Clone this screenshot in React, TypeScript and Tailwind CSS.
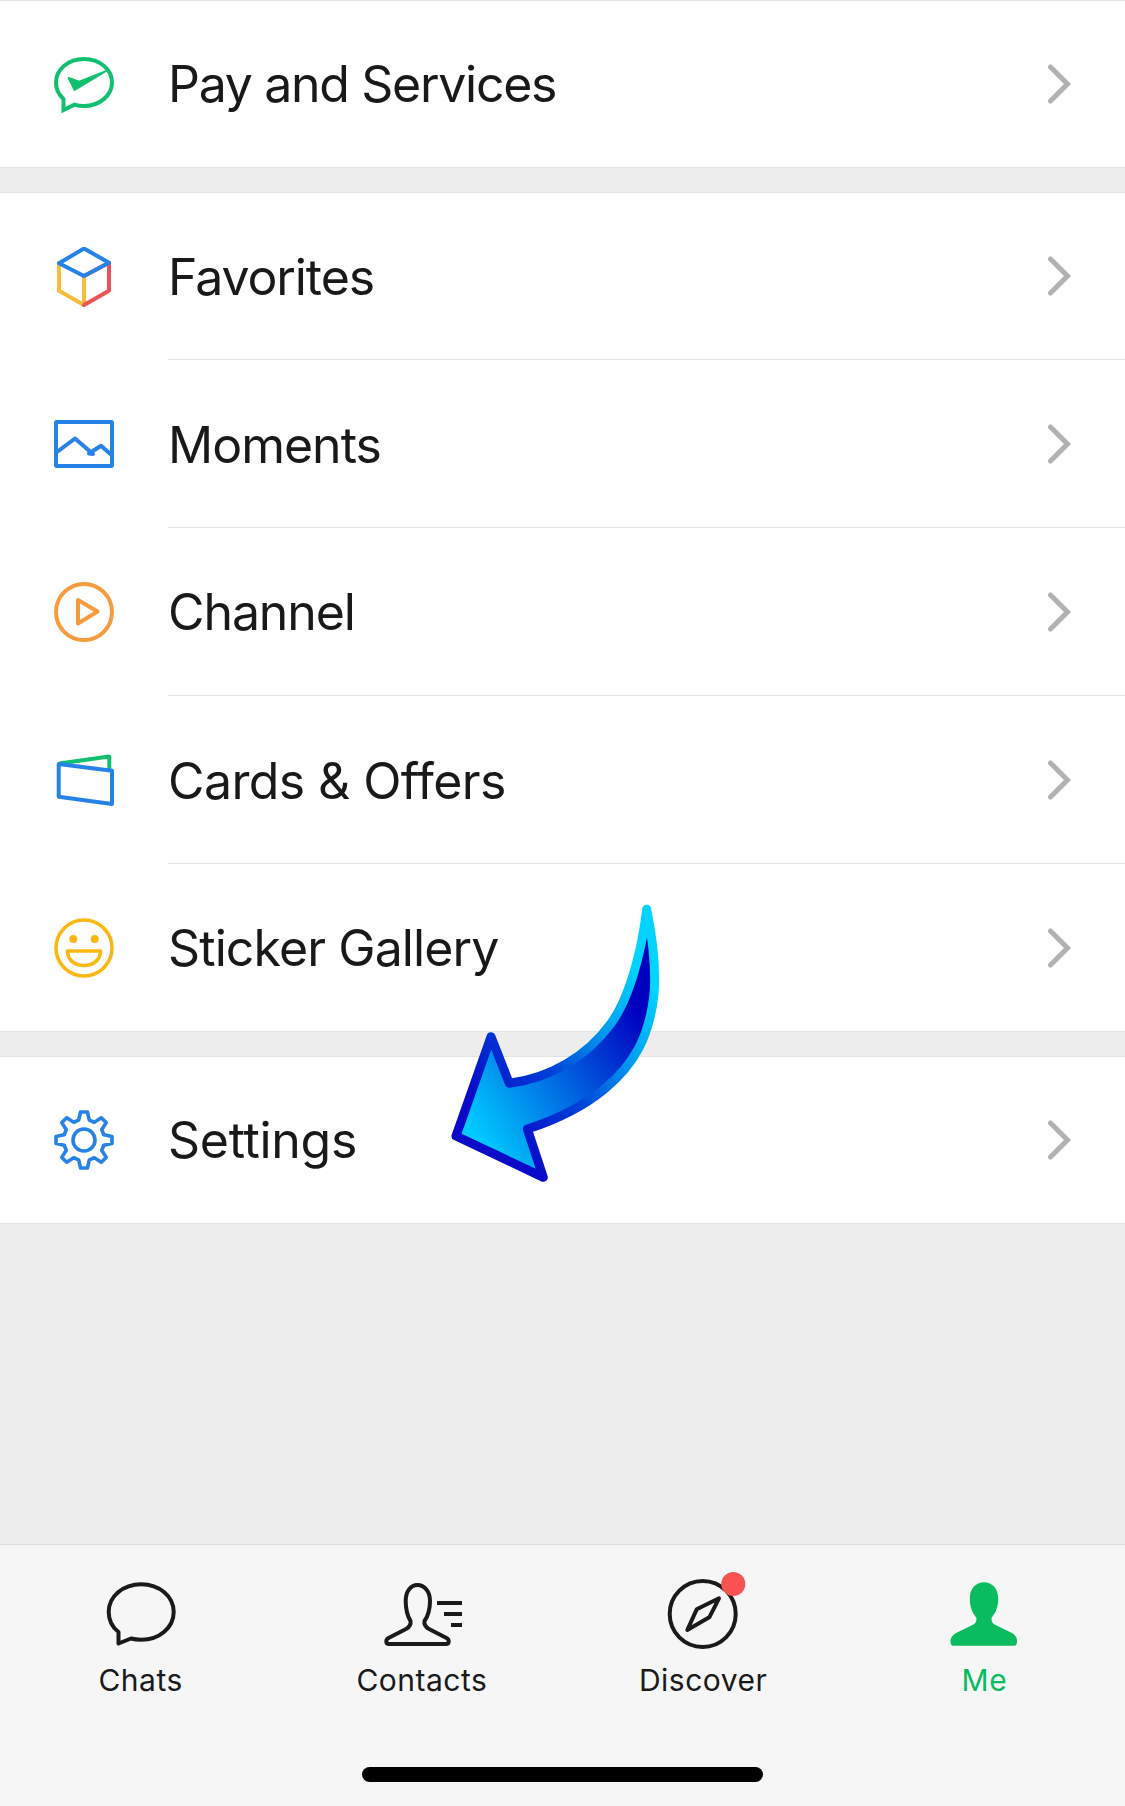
const gearPath = () => {
  const pts: string[] = [];
  for (let i = 0; i < 8; i++) {
    const a = (i * 45 * Math.PI) / 180 - Math.PI / 2;
    const d = (deg: number) => (deg * Math.PI) / 180;
    const list: [number, number][] = [
      [a - d(15), 20.5],
      [a - d(7), 28.2],
      [a + d(7), 28.2],
      [a + d(15), 20.5],
    ];
    list.forEach(([t, r]) => pts.push(`${(30 + r * Math.cos(t)).toFixed(2)} ${(30 + r * Math.sin(t)).toFixed(2)}`));
  }
  return "M" + pts.join(" L") + " Z";
};

const PayIcon = () => (
  <svg width="60" height="60" viewBox="0 0 60 60" fill="none">
    <path d="M9.5 56 L9.5 45 C4.5 40.5 2 35 2 28.5 C2 15 14.5 5 30 5 C45.5 5 58 15 58 28.5 C58 41.5 45.5 52 30 52 C26.5 52 23.5 51.5 20.5 50.7 Z" stroke="#10c06f" strokeWidth="4" />
    <path d="M14.5 23.8 L25.3 27.5 L52.5 16.8 L20.6 36 Z" fill="#10c06f" stroke="#10c06f" strokeWidth="1.8" strokeLinejoin="round" />
  </svg>
);

const CubeIcon = () => (
  <svg width="60" height="60" viewBox="0 0 60 60" fill="none" strokeWidth="4" strokeLinejoin="round" strokeLinecap="round">
    <path d="M5 43.7 V16.3 M5 43.7 L30 58 V29" stroke="#fbbc3a" />
    <path d="M30 58 L55 43.7 V15.7 L30 29" stroke="#ea5455" />
    <path d="M30 1.5 L55 15.7 L30 29 L5 16.3 Z" stroke="#2782e8" />
  </svg>
);

const MomentsIcon = () => (
  <svg width="60" height="60" viewBox="0 0 60 60" fill="none" stroke="#2782e8" strokeWidth="4" strokeLinejoin="round">
    <rect x="2" y="8" width="56" height="44" rx="1" />
    <path d="M3 38 L21 24.5 L39 40 L35 39.5 L47 31.7 L57.5 41" />
  </svg>
);

const ChannelIcon = () => (
  <svg width="60" height="60" viewBox="0 0 60 60" fill="none" stroke="#f79c3e" strokeWidth="4" strokeLinejoin="round">
    <circle cx="30" cy="30" r="28" />
    <path d="M24 18 V41.5 L43.5 29.5 Z" />
  </svg>
);

const CardsIcon = () => (
  <svg width="60" height="60" viewBox="0 0 60 60" fill="none" strokeWidth="4" strokeLinejoin="round">
    <path d="M5.3 13.5 L55.3 6.5 V19.5" stroke="#10c06f" />
    <path d="M4.7 14 L58 20.7 V54 L4.7 46.7 Z" stroke="#2782e8" />
  </svg>
);

const StickerIcon = () => (
  <svg width="60" height="60" viewBox="0 0 60 60" fill="none" stroke="#fbb813" strokeWidth="3.6" strokeLinejoin="round">
    <circle cx="30" cy="30" r="28" />
    <circle cx="19.3" cy="21" r="4" fill="#fbb813" stroke="none" />
    <circle cx="40.7" cy="21" r="4" fill="#fbb813" stroke="none" />
    <path d="M13.5 33 H46.5 C46.5 42 39 47.5 30 47.5 C21 47.5 13.5 42 13.5 33 Z" />
  </svg>
);

const SettingsIcon = () => (
  <svg width="60" height="60" viewBox="0 0 60 60" fill="none" stroke="#2782e8" strokeWidth="3.6" strokeLinejoin="round">
    <path d={gearPath()} />
    <circle cx="30" cy="30" r="11" />
  </svg>
);

const Chevron = () => (
  <svg width="24" height="40" viewBox="0 0 24 40" fill="none" className="shrink-0">
    <path d="M3.5 3 L20.5 20 L3.5 37" stroke="#b2b2b2" strokeWidth="5" strokeLinecap="round" strokeLinejoin="miter" />
  </svg>
);

const Row = ({ icon, label, divider, h, text = "tracking-[-1.1px] pt-[2px]" }: { icon: React.ReactNode; label: string; divider?: boolean; h: string; text?: string }) => (
  <div className={`flex ${h}`}>
    <div className="flex w-[168px] shrink-0 items-center pl-[54px]">{icon}</div>
    <div className={`flex flex-1 items-center justify-between pr-[54px] ${divider ? "border-b border-[#e3e3e3]" : ""}`}>
      <span className={`text-[50px] text-[#191919] ${text}`}>{label}</span>
      <Chevron />
    </div>
  </div>
);

const ChatsIcon = () => (
  <svg width="80" height="72" viewBox="0 0 72 72" fill="none" stroke="#1a1a1a" strokeWidth="4" strokeLinejoin="round">
    <path d="M13.5 65.5 V54 C7 49 3.7 42 3.7 34 C3.7 18.5 18 6.3 36.2 6.3 C54.4 6.3 68.7 18.5 68.7 34 C68.7 49.5 54.4 61.7 36.2 61.7 C32 61.7 29 61.3 26 60.5 Z" />
  </svg>
);

const ContactsIcon = () => (
  <svg width="80" height="72" viewBox="0 0 80 72" fill="none" stroke="#1a1a1a" strokeWidth="4" strokeLinejoin="round">
    <path d="M7 66 C3.5 66 3.5 61.5 6.5 60 L24 51 C27.5 49 29 46 28.5 43 C25.5 38 23.7 31 23.7 23 C23.7 13 29 7 35.5 7 C42 7 48 13 48 23 C48 31 46 38 42.5 43 C42 46 43.5 49 47 51 L64.5 60 C67.5 61.5 67.5 66 64 66 Z" />
    <path d="M55 25 H80 M62 36 H80 M69 47 H80" />
  </svg>
);

const DiscoverIcon = () => (
  <svg width="80" height="72" viewBox="0 0 80 72" fill="none" stroke="#1a1a1a" strokeWidth="4" strokeLinejoin="round" className="overflow-visible">
    <circle cx="39.7" cy="36" r="33" />
    <path d="M56 20.3 L33.7 31.3 L24.3 52 L46.3 39.3 Z" />
    <circle cx="70.3" cy="6" r="12" fill="#fa5151" stroke="none" />
  </svg>
);

const MeIcon = () => (
  <svg width="80" height="72" viewBox="-1.5 0 80 72" fill="#09bc5f">
    <path d="M8 67.7 C5.5 67.7 5 66 5 63 C5 59.5 7 57 11 54.7 L28 46.5 C30.5 45 31 43 31 40 C27 35 24.3 29 24.3 21 C24.3 11 30 4.3 38.5 4.3 C47 4.3 52.7 11 52.7 21 C52.7 29 50 35 46 40 C46 43 46.5 45 49 46.5 L66 54.7 C70 57 71.5 59.5 71.5 63 C71.5 66 71 67.7 68.5 67.7 Z" />
  </svg>
);

const Tab = ({ icon, label, active }: { icon: React.ReactNode; label: string; active?: boolean }) => (
  <div className="flex flex-col items-center">
    {icon}
    <span className={`mt-[12px] text-[30px] leading-[36px] tracking-[0.5px] ${active ? "text-[#09bc5f]" : "text-[#1a1a1a]"}`}>{label}</span>
  </div>
);

const Arrow = () => (
  <svg width="260" height="310" viewBox="0 0 780 930" fill="url(#arrowFill)" stroke="url(#arrowStroke)" strokeWidth="27" strokeLinejoin="round" className="absolute left-[430px] top-[890px]">
    <defs>
      <linearGradient id="arrowFill" gradientUnits="userSpaceOnUse" x1="120" y1="720" x2="640" y2="380">
        <stop offset="0" stopColor="#00ccff" />
        <stop offset="0.45" stopColor="#0070e4" />
        <stop offset="1" stopColor="#0000c0" />
      </linearGradient>
      <linearGradient id="arrowStroke" gradientUnits="userSpaceOnUse" x1="200" y1="700" x2="680" y2="300">
        <stop offset="0" stopColor="#0a0ac8" />
        <stop offset="0.35" stopColor="#0040d8" />
        <stop offset="0.7" stopColor="#00a0f0" />
        <stop offset="1" stopColor="#00d4ff" />
      </linearGradient>
    </defs>
    <path d="M650 58 C665 130 674 200 674 270 C674 340 655 420 627 473 C590 545 500 650 292 717 L340 862 L78 738 L183 440 L238 580 C360 565 470 500 543 400 C595 330 635 190 650 58 Z" />
  </svg>
);

export default function App() {
  return (
    <div className="relative flex h-[1806px] w-[1125px] flex-col overflow-hidden bg-[#ededed] font-['Inter','Liberation_Sans',sans-serif]">
      {/* Pay */}
      <div className="border-y border-[#e3e3e3] bg-white">
        <Row icon={<PayIcon />} label="Pay and Services" h="h-[166px]" text="tracking-[-1.3px]" />
      </div>

      {/* Main list */}
      <div className="mt-[24px] border-y border-[#e3e3e3] bg-white">
        <Row icon={<CubeIcon />} label="Favorites" divider h="h-[167px]" />
        <Row icon={<MomentsIcon />} label="Moments" divider h="h-[168px]" text="tracking-[-1px] pt-[3px]" />
        <Row icon={<ChannelIcon />} label="Channel" divider h="h-[168px]" />
        <Row icon={<CardsIcon />} label="Cards & Offers" divider h="h-[168px]" text="tracking-[-0.6px] pt-[3px]" />
        <Row icon={<StickerIcon />} label="Sticker Gallery" h="h-[167px]" text="tracking-[-0.9px] pt-[2px]" />
      </div>

      {/* Settings */}
      <div className="mt-[24px] border-y border-[#e3e3e3] bg-white">
        <Row icon={<SettingsIcon />} label="Settings" h="h-[166px]" text="tracking-[-0.3px]" />
      </div>

      {/* Tab bar */}
      <div className="mt-auto flex h-[262px] flex-col border-t border-[#dcdcdc] bg-[#f6f6f6]">
        <div className="grid grid-cols-4 pt-[33px]">
          <Tab icon={<ChatsIcon />} label="Chats" />
          <Tab icon={<ContactsIcon />} label="Contacts" />
          <Tab icon={<DiscoverIcon />} label="Discover" />
          <Tab icon={<MeIcon />} label="Me" active />
        </div>
        <div className="mx-auto mb-[24px] mt-auto h-[15px] w-[401px] rounded-full bg-black" />
      </div>

      <Arrow />
    </div>
  );
}
